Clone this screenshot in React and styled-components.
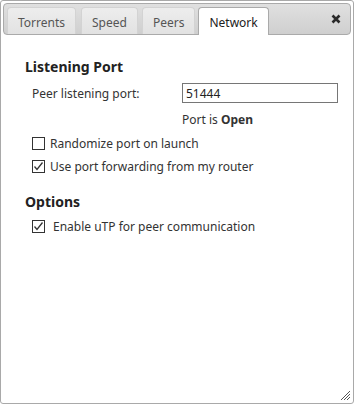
import React from "react";
import styled, { createGlobalStyle } from "styled-components";

const Global = createGlobalStyle`
  html, body { margin: 0; padding: 0; background: #fff; }
  body { font-family: "Noto Sans", "Open Sans", sans-serif; font-size: 12px; color: #222; }
  * { box-sizing: border-box; }
`;

const Dialog = styled.div`
  width: 354px;
  height: 404px;
  border: 1px solid #a9a9a9;
  border-radius: 3px;
  padding: 2px;
  display: flex;
  flex-direction: column;
  position: relative;
  background: #fff;
`;

const TitleBar = styled.div`
  height: 32px;
  border: 1px solid #aaa;
  border-radius: 4px;
  background: linear-gradient(#e0e0e0, #cfcfcf);
  display: flex;
  align-items: flex-end;
  padding: 0 3px;
  position: relative;
`;

const Tab = styled.div`
  height: ${(p) => (p.$active ? "28px" : "27px")};
  margin-bottom: ${(p) => (p.$active ? "-1px" : "0")};
  margin-right: ${(p) => p.$gap}px;
  padding: 2px 10px 0;
  border: 1px solid ${(p) => (p.$active ? "#aaa" : "#d3d3d3")};
  border-bottom: 0;
  border-radius: 4px 4px 0 0;
  background: ${(p) => (p.$active ? "#fff" : "linear-gradient(#ededed, #e2e2e2)")};
  color: ${(p) => (p.$active ? "#212121" : "#555")};
  font-size: 12px;
  display: flex;
  align-items: center;
`;

const Close = styled.div`
  position: absolute;
  right: 9px;
  top: 10px;
  width: 10px;
  height: 10px;
  display: flex;
`;

const Content = styled.div`
  flex: 1;
  padding: 22px 10px 0 22px;
`;

const Heading = styled.div`
  font-weight: bold;
  font-size: 14px;
  color: #222;
  margin: ${(p) => p.$mt || 0}px 0 ${(p) => p.$mb || 5}px 0;
`;

const Row = styled.div`
  display: flex;
  align-items: center;
  padding-left: 7px;
  height: 24px;
`;

const Label = styled.span`
  width: 150px;
  flex-shrink: 0;
  color: #333;
`;

const Input = styled.input`
  width: 156px;
  flex-shrink: 0;
  height: 20px;
  border: 1px solid #767676;
  padding: 0 3px;
  font: inherit;
  color: #222;
  outline: none;
`;

const Status = styled.div`
  padding-left: 157px;
  margin-top: 2px;
  height: 25px;
  display: flex;
  align-items: center;
  color: #333;
`;

const Check = styled.label`
  display: flex;
  align-items: center;
  padding-left: 7px;
  height: 23px;
  color: #333;
  gap: ${(p) => p.$gap || 5}px;
`;

const Box = styled.span`
  width: 13px;
  height: 13px;
  border: 1px solid #333;
  background: #fff;
  display: inline-flex;
  align-items: center;
  justify-content: center;
`;

const Grip = styled.svg`
  position: absolute;
  right: 2px;
  bottom: 2px;
`;

function CheckBox({ checked }) {
  return (
    <Box>
      {checked && (
        <svg width="11" height="11" viewBox="0 0 11 11">
          <path d="M1.5 5.5 L4 8.5 L9.5 1.5" fill="none" stroke="#333" strokeWidth="1.3" />
        </svg>
      )}
    </Box>
  );
}

export default function App() {
  return (
    <>
      <Global />
      <Dialog>
        <TitleBar>
          <Tab $gap={5}>Torrents</Tab>
          <Tab $gap={4}>Speed</Tab>
          <Tab $gap={3}>Peers</Tab>
          <Tab $active $gap={0}>Network</Tab>
          <Close>
            <svg width="10" height="10" viewBox="0 0 10 10">
              <path d="M1.5 1.5 L8.5 8.5 M8.5 1.5 L1.5 8.5" stroke="#2a2a2a" strokeWidth="2.6" strokeLinecap="butt" />
            </svg>
          </Close>
        </TitleBar>
        <Content>
          <Heading>Listening Port</Heading>
          <Row>
            <Label>Peer listening port:</Label>
            <Input defaultValue="51444" />
          </Row>
          <Status>
            <span>Port is <b>Open</b></span>
          </Status>
          <Check>
            <CheckBox />
            <span>Randomize port on launch</span>
          </Check>
          <Check>
            <CheckBox checked />
            <span>Use port forwarding from my router</span>
          </Check>
          <Heading $mt={14} $mb={4}>Options</Heading>
          <Check $gap={8}>
            <CheckBox checked />
            <span>Enable uTP for peer communication</span>
          </Check>
        </Content>
        <Grip width="12" height="12" viewBox="0 0 12 12">
          <path d="M11 2 L2 11 M11 5 L5 11 M11 8 L8 11" stroke="#555" strokeWidth="1" />
        </Grip>
      </Dialog>
    </>
  );
}
